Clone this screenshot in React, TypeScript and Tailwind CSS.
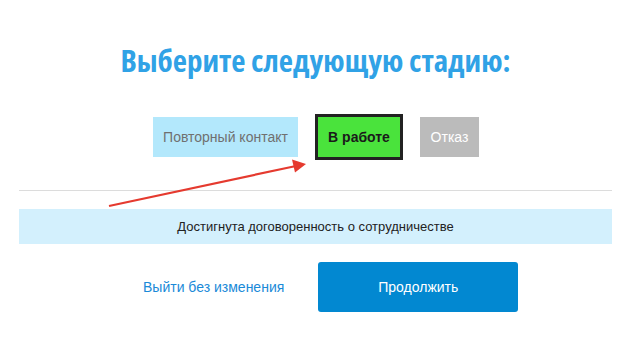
import React from 'react';

export default function App() {
  return (
    <div className="relative w-[631px] h-[343px] bg-white font-['Liberation_Sans',Arial,sans-serif]">
      <h1 className="pt-[38px] text-center text-[31px] leading-[44px] font-bold text-[#30a2e6] font-['Open_Sans',sans-serif] [font-stretch:75%]">
        Выберите следующую стадию:
      </h1>

      <div className="mt-[32px] flex items-center justify-center gap-[17px] pl-[1px]">
        <button className="h-[40px] w-[145px] bg-[#b3e8fc] text-[14px] text-[#707070]">Повторный контакт</button>
        <button className="h-[46px] w-[88px] border-[3px] border-[#222222] bg-[#4ae33c] text-[14px] font-bold text-[#1a1a1a]">
          В работе
        </button>
        <button className="h-[40px] w-[59px] bg-[#bbbbbb] text-[14px] text-white">Отказ</button>
      </div>

      <div className="mx-[19px] mt-[30px] h-px bg-[#dcdcdc]" />

      <div className="mx-[19px] mt-[18px] flex h-[35px] items-center justify-center bg-[#d3f0fd] text-[13px] text-[#222222]">
        Достигнута договоренность о сотрудничестве
      </div>

      <div className="mt-[18px] flex items-center">
        <a className="ml-[143px] text-[14px] text-[#1a8ad8]">Выйти без изменения</a>
        <button className="ml-[34px] h-[50px] w-[200px] rounded-[3px] bg-[#0288d1] text-[14px] text-white">
          Продолжить
        </button>
      </div>

      <svg className="absolute left-0 top-0 pointer-events-none" width="631" height="343">
        <line x1="109" y1="206" x2="296" y2="166" stroke="#e53a2f" strokeWidth="2.2" />
        <polygon points="306,164 292,159.5 295,172.5" fill="#e53a2f" />
      </svg>
    </div>
  );
}
